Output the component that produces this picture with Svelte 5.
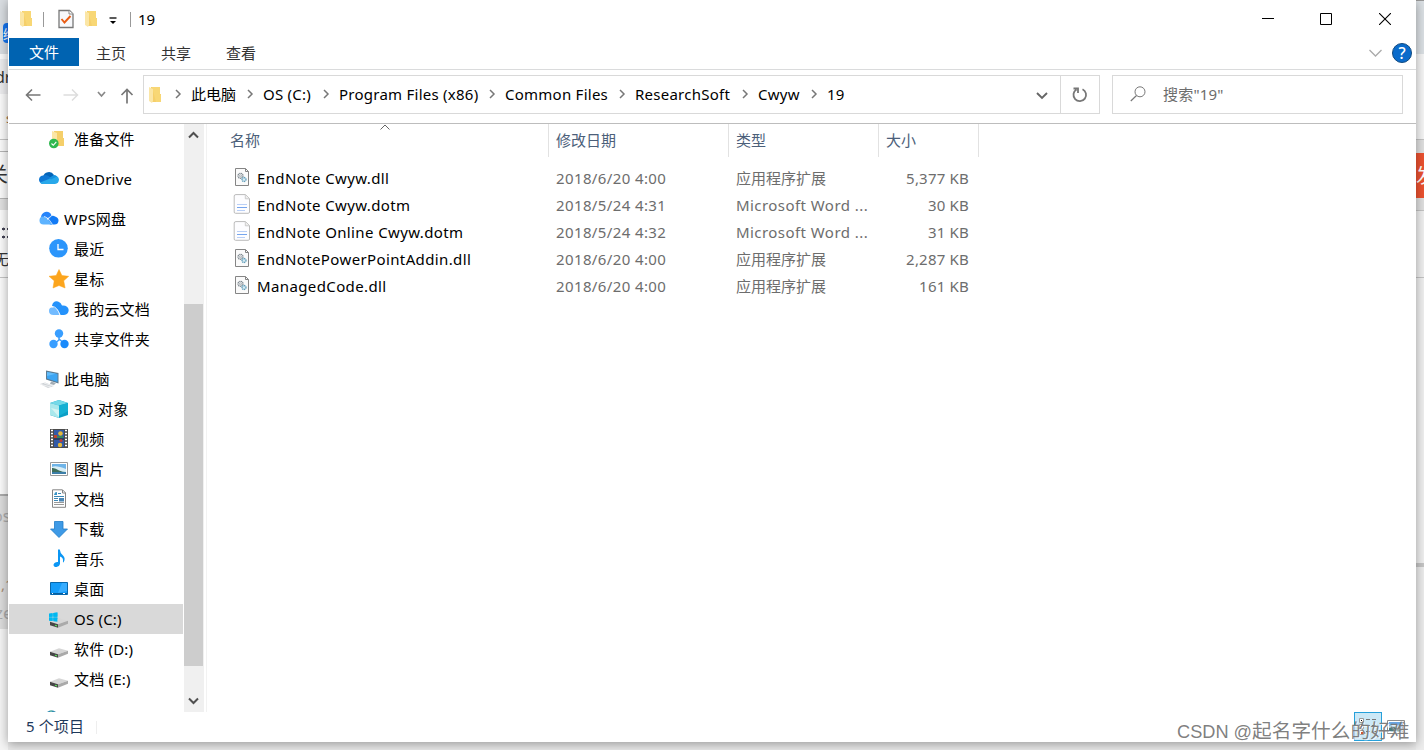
<script>
  const crumbs = [
    { t: '此电脑', w: 72 },
    { t: 'OS (C:)', w: 76 },
    { t: 'Program Files (x86)', w: 166 },
    { t: 'Common Files', w: 130 },
    { t: 'ResearchSoft', w: 123 },
    { t: 'Cwyw', w: 69 },
    { t: '19', w: 40 }
  ];
  const nav = [
    { t: '准备文件', i: 'sync' },
    { t: 'OneDrive', i: 'onedrive', root: true },
    { t: 'WPS网盘', i: 'wps', root: true },
    { t: '最近', i: 'clock' },
    { t: '星标', i: 'star' },
    { t: '我的云文档', i: 'cloud' },
    { t: '共享文件夹', i: 'share' },
    { t: '此电脑', i: 'pc', root: true },
    { t: '3D 对象', i: 'cube' },
    { t: '视频', i: 'video' },
    { t: '图片', i: 'picture' },
    { t: '文档', i: 'doc' },
    { t: '下载', i: 'down' },
    { t: '音乐', i: 'music' },
    { t: '桌面', i: 'desktop' },
    { t: 'OS (C:)', i: 'osdrive', sel: true },
    { t: '软件 (D:)', i: 'drive' },
    { t: '文档 (E:)', i: 'drive' },
    { t: '', i: 'net', root: true }
  ];
  const files = [
    { n: 'EndNote Cwyw.dll', d: '2018/6/20 4:00', k: '应用程序扩展', s: '5,377 KB', i: 'dll' },
    { n: 'EndNote Cwyw.dotm', d: '2018/5/24 4:31', k: 'Microsoft Word ...', s: '30 KB', i: 'dotm' },
    { n: 'EndNote Online Cwyw.dotm', d: '2018/5/24 4:32', k: 'Microsoft Word ...', s: '31 KB', i: 'dotm' },
    { n: 'EndNotePowerPointAddin.dll', d: '2018/6/20 4:00', k: '应用程序扩展', s: '2,287 KB', i: 'dll' },
    { n: 'ManagedCode.dll', d: '2018/6/20 4:00', k: '应用程序扩展', s: '161 KB', i: 'dll' }
  ];
</script>

{#snippet folder()}
  <svg width="14" height="18" viewBox="0 0 14 18"><path d="M3 1h9v7h1v8H3z" fill="#f5cf6a"/><path d="M4 1h8v7l1 1v7H8z" fill="#f8d775"/><path d="M1 1l4 2v12l-1 2-3-2z" fill="#fbe6a6"/></svg>
{/snippet}

{#snippet chev()}
  <svg class="chev" width="8" height="10" viewBox="0 0 8 10"><path d="M2 1l4 4-4 4" fill="none" stroke="#777" stroke-width="1.5"/></svg>
{/snippet}

{#snippet icon(name)}
  <svg class="ico" width="20" height="20" viewBox="0 0 20 20">
    {#if name === 'sync'}
      <path d="M5 2h9v7h1v8H5z" fill="#f5cf6a"/><path d="M3 2l5 2v12H3z" fill="#fbe6a6"/>
      <circle cx="4.8" cy="14.5" r="4.8" fill="#2fb84f"/><path d="M2.5 14.5l1.8 1.8 3-3.4" fill="none" stroke="#fff" stroke-width="1.1"/>
    {:else if name === 'onedrive'}
      <path d="M4 8a6 6 0 0 1 11-2l-2 5H4z" fill="#0364b8"/><path d="M4.500 6.500Q8 5 12 9l-5 6H4a4 4 0 0 1 .5-8.500z" fill="#0f78d4"/>
      <path d="M10 10l5-3.500a4.500 4.500 0 0 1 5 4q-.2 4-4 4.500H4q-2 0-3-1.500z" fill="#28a8ea"/><path d="M10 9l5-3q2 .3 3 1.500l-6 3z" fill="#1490df"/>
    {:else if name === 'wps'}
      <path d="M2 8.500q0-4 4-5.500 5-1 6.500 3.500L9 9z" fill="#2684fa"/><path d="M8 12q3-6 7-5 5 1.500 4.500 5-.5 3.500-4 3.500H11z" fill="#127af5"/><path d="M4 7.500q3 0 5.500 3.500l4 4.500H4.500Q.5 15.500.5 11.500T4 7.500z" fill="#5db3ff"/><path d="M5 7.500q4 .5 8.500 8M8.500 11q2-3 4-4" stroke="#fff" stroke-width=".7" fill="none"/>
    {:else if name === 'clock'}
      <circle cx="9.500" cy="9.300" r="9.300" fill="#2b95fb"/><path d="M9 5v5.500h5.500" fill="none" stroke="#fff" stroke-width="1.300"/>
    {:else if name === 'star'}
      <path d="M10 .5l2.900 6 6.800.8-5 4.500 1.400 7.200L10 16.500 4 19l1.200-7.200L0 7.300l7.200-.8z" fill="#fca51d" stroke="#fca51d" stroke-linejoin="round" stroke-width=".5"/>
    {:else if name === 'cloud'}
      <path d="M3 7q1-5.500 6-4.500 3 1 4 4 6-.5 6.700 4.500-.2 4.500-4.700 5h-3.500z" fill="#2492fb"/><path d="M3.500 8.500Q7 8.500 9 12l2 4H4.500Q0 16 0 12t3.500-3.500z" fill="#72bbff"/><path d="M3 7.500q5 0 8 8.500" fill="none" stroke="#fff" stroke-width="1"/>
    {:else if name === 'share'}
      <path d="M10 4v7L5 15M10 10l6 5" stroke="#3b9cfb" stroke-width="1.500" fill="none"/><circle cx="10" cy="4.500" r="4.200" fill="#399eff"/><circle cx="4.500" cy="15" r="4.200" fill="#399eff"/><circle cx="15.500" cy="15" r="4.200" fill="#198afb"/>
    {:else if name === 'pc'}
      <path d="M7 1.500l12.500 2.500v10.500L7 10.500z" fill="#5c7b92"/><path d="M8 3l10.500 2v8L8 9.500z" fill="#3ca5f3"/><path d="M8 3l9 1.700L8 7z" fill="#62bcfa"/><path d="M12 12.500l5 1.500-2 2-4-1z" fill="#a3adb5"/><path d="M1 15l5-1.500 9 3.500-6 2z" fill="#cfd3d7"/><path d="M2 15.500l10 2.500m-7-4 9 3" stroke="#fff" stroke-width=".6"/>
    {:else if name === 'cube'}
      <path d="M1 4l9-3 9 3v12l-9 3-9-3z" fill="#0c9fc5"/><path d="M1 4l9-3 9 3-9 2.500z" fill="#74d9e8"/><path d="M1 4l9 2.500V19l-9-3z" fill="#a9e8ec"/><path d="M2 9l8 2v7z" fill="#d5f4f3"/><path d="M10 6.500L19 4v8l-9 5z" fill="#16b0d3"/>
    {:else if name === 'video'}
      <path d="M1 0h18v19H1z" fill="#4b4b4b"/><path d="M5 1h10v17H5z" fill="#325aa8"/><path d="M5 10h10" stroke="#222"/><path d="M2 1.500h2m-2 3h2m-2 3h2m-2 3h2m-2 3h2m-2 3h2M16 1.500h2m-2 3h2m-2 3h2m-2 3h2m-2 3h2m-2 3h2" stroke="#fff" stroke-width="1.600"/><circle cx="11.500" cy="4.500" r="2.300" fill="#e4b93b"/><path d="M5 6h3v3H5z" fill="#bc442e"/><path d="M8 7h6v2H8z" fill="#37875a"/><circle cx="11" cy="16" r="2.200" fill="#e4b93b"/><circle cx="12" cy="11.500" r="1.500" fill="#c03e38"/>
    {:else if name === 'picture'}
      <path d="M1.500 3.500h17v13h-17z" fill="#fff" stroke="#9a9a9a"/><path d="M3 5h14v10H3z" fill="#6fb4e8"/><path d="M3 8q4-2 14 2v3H3z" fill="#d8edf5"/><path d="M3 9q3-.5 7 2.500 4 1.500 7 1.500H3z" fill="#3f6e5b"/><path d="M3 13h14v2H3z" fill="#3c7ea8"/>
    {:else if name === 'doc'}
      <path d="M3.500.8h10l3 3v14.500h-13z" fill="#fff" stroke="#868686"/><path d="M13.500 1v3h3" fill="none" stroke="#868686"/><path d="M5 6l1-2.500L8 3v3z" fill="#3894c7"/><path d="M9 4.500h3M5 7.500h10M5 9.500h4M5 11.500h4" stroke="#3b88b6"/><path d="M10 9h5v3.500h-5z" fill="#4a86b5"/><path d="M5 13.500h10M5 15.500h10" stroke="#999"/>
    {:else if name === 'down'}
      <path d="M5.500 2.500h8.500V10h4.500L10 18.500 1.500 10h4z" fill="#3e9ae6" stroke="#1f7cc8" stroke-width=".8"/>
    {:else if name === 'music'}
      <path d="M9 .5h1.800Q11 4 14 6.500q3 3 .5 7-1-.3-.5-1 .5-4-3-5v7.500q-.5 2.700-3.500 3-3 0-3-2.300 1-3 4.500-2.700z" fill="#0b96f4"/>
    {:else if name === 'desktop'}
      <path d="M1.500 3.500h17v12h-17z" fill="#159cf9" stroke="#0868ad"/><path d="M13 4h5v8L9 14z" fill="#38adff"/><path d="M2 14.500h16" stroke="#075e9d"/><path d="M3 14.500h1m10 0h2" stroke="#fff"/>
    {:else if name === 'osdrive' || name === 'drive'}
      {#if name === 'osdrive'}<path d="M0 4.800l3.600-.6v3.600H0zM4.300 4.100L8.400 3.500v4.300H4.300zM0 8.500h3.600v3.600L0 11.500zM4.300 8.500h4.100v4.300l-4.100-.6z" fill="#00b8f1"/>{/if}
      <g transform="translate(0 .8)"><path d="M1 12l9-3.500 9 2.500-10 3.500z" fill="#d6d6d6"/><path d="M9 14.500l10-3.500v3L9 18z" fill="#aaa"/><path d="M1 12l8 2.500V18l-8-2.500z" fill="#464646"/><path d="M6 15.500l2 .6" stroke="#5ee65c" stroke-width="1.200"/></g>
      {#if name === 'osdrive'}<path d="M0 4.800l3.600-.6v3.600H0zM4.300 4.100L8.400 3.500v4.300H4.300zM0 8.500h3.600v3.600L0 11.500zM4.300 8.500h4.100v4.300l-4.100-.6z" fill="#00b8f1"/>{/if}
    {:else if name === 'net'}
      <path d="M8 3q4.500-3.500 9 0v3H8z" fill="#328daf"/><path d="M11 2h2" stroke="#8fd7b1"/>
    {/if}
  </svg>
{/snippet}

{#snippet fileIcon(name)}
  <svg class="fico" width="18" height="20" viewBox="0 0 18 20">
    {#if name === 'dll'}
      <path d="M2.500 1.500h10l3 3v14h-13z" fill="#fafafa" stroke="#858585"/><path d="M12.500 1.500v3h3" fill="none" stroke="#858585"/>
      <circle cx="7.500" cy="8.800" r="2.500" fill="none" stroke="#7d8890" stroke-width="1.300" stroke-dasharray="1.200 .5"/><circle cx="7.500" cy="8.800" r="1" fill="none" stroke="#8b949a" stroke-width=".7"/><circle cx="11" cy="12.500" r="2" fill="#d9edf5" stroke="#619db9" stroke-width="1.300" stroke-dasharray="1.200 .5"/>
    {:else}
      <path d="M3 .6h9.500l4 4V18q0 1.300-1.300 1.300H2.500Q1.200 19.300 1.200 18V2Q1.200.6 3 .6z" fill="#fdfdff" stroke="#bbb"/><path d="M12.300.8v4h4" fill="#eee" stroke="#c3c3c3" stroke-width=".8"/><path d="M4 10.500h10" stroke="#b9cff6"/><path d="M4 13.500h10" stroke="#76a5ee"/><path d="M4 16.500h8" stroke="#b9cff6"/>
    {/if}
  </svg>
{/snippet}

<div class="stage">
  <div class="strip left">
    <i class="badge">绘</i><span class="t1">dr</span><span class="t2">s</span><i class="rule a"></i><i class="band"></i>
    <span class="t3">关</span><i class="band b2"></i><span class="dots"></span><span class="t4">无</span><i class="rule b"></i>
    <i class="dim"></i><span class="t5">os</span><span class="t6">,1</span><span class="t7">ze</span>
  </div>
  <div class="strip right"><i class="rule a"></i><i class="rule c"></i><i class="rule b"></i><span class="red">发</span><i class="low"></i></div>

  <main class="window">
    <header class="title">
      {@render folder()}<i class="sep s1"></i>
      <svg class="check" width="16" height="20" viewBox="0 0 16 20"><path d="M1 1.500h10.500l3.500 3.500v13.500H1z" fill="#f7f8fb" stroke="#777" stroke-width="1.300"/><path d="M11 1.500V5h4" fill="#fff" stroke="#888"/><path d="M3.500 10l3 3.500 6-6.500" fill="none" stroke="#e85c14" stroke-width="1.900"/></svg>
      {@render folder()}
      <svg class="more" width="8" height="8" viewBox="0 0 8 8"><path d="M.5 1h7" stroke="#000" stroke-width="1.300"/><path d="M1 4h6L4 7z"/></svg>
      <i class="sep s2"></i><span class="name">19</span>
      <div class="controls">
        <svg width="12" height="12" viewBox="0 0 12 12"><path d="M0 5.500h12" stroke="#000"/></svg>
        <svg width="12" height="12" viewBox="0 0 12 12"><path d="M.5.5h11v11H.5z" fill="none" stroke="#000"/></svg>
        <svg width="12" height="12" viewBox="0 0 12 12"><path d="M0 0l12 12M12 0L0 12" stroke="#000" stroke-width="1.100"/></svg>
      </div>
    </header>
    <nav class="tabs">
      <span class="file">文件</span><span>主页</span><span>共享</span><span>查看</span>
      <svg class="collapse" width="13" height="8" viewBox="0 0 13 8"><path d="M.5 1l6 6 6-6" fill="none" stroke="#aaa" stroke-width="1.300"/></svg>
      <b class="help">?</b>
    </nav>
    <section class="address">
      <div class="arrows">
        <svg width="16" height="14" viewBox="0 0 16 14"><path d="M15.500 7H1M7 1.500L1.500 7 7 12.500" fill="none" stroke="#777" stroke-width="1.600"/></svg>
        <svg width="16" height="14" viewBox="0 0 16 14"><path d="M.5 7H15M9 1.500L14.500 7 9 12.500" fill="none" stroke="#ddd" stroke-width="1.500"/></svg>
        <svg width="9" height="7" viewBox="0 0 9 7"><path d="M1 1l3.500 4L8 1" fill="none" stroke="#888" stroke-width="1.700"/></svg>
        <svg width="14" height="16" viewBox="0 0 14 16"><path d="M7 15.500V1.500M1.500 7L7 1.500 12.500 7" fill="none" stroke="#777" stroke-width="1.700"/></svg>
      </div>
      <div class="path">
        {@render folder()}
        <div class="lead">{@render chev()}</div>
        {#each crumbs as c, n}
          <div class="crumb" style:width="{c.w}px"><span>{c.t}</span>{#if n < crumbs.length - 1}{@render chev()}{/if}</div>
        {/each}
        <svg class="drop" width="12" height="8" viewBox="0 0 12 8"><path d="M1 1l5 5 5-5" fill="none" stroke="#666" stroke-width="1.900"/></svg>
      </div>
      <div class="refresh"><svg width="16" height="16" viewBox="0 0 16 16"><path d="M10.500 2.200A6.300 6.300 0 1 1 4.500 2.500M1.500 1.500H6V6" fill="none" stroke="#777" stroke-width="1.800"/></svg></div>
      <div class="search"><svg width="16" height="16" viewBox="0 0 16 16"><circle cx="10" cy="5.800" r="5" fill="none" stroke="#777"/><path d="M6.500 9.500L.8 15" stroke="#777" stroke-width="1.200"/></svg><span>搜索"19"</span></div>
    </section>
    <section class="body">
      <aside>
        {#each nav as item}
          <div class="item" class:root={item.root} class:sel={item.sel}>{@render icon(item.i)}<span>{item.t}</span></div>
        {/each}
      </aside>
      <div class="scroll">
        <svg width="11" height="8" viewBox="0 0 11 8"><path d="M1 6.500L5.500 2 10 6.500" fill="none" stroke="#505050" stroke-width="2"/></svg>
        <i></i>
        <svg width="11" height="8" viewBox="0 0 11 8"><path d="M1 1.500L5.500 6 10 1.500" fill="none" stroke="#505050" stroke-width="2"/></svg>
      </div>
      <div class="list">
        <div class="head row">
          <span class="c1">名称</span><span class="c2">修改日期</span><span class="c3">类型</span><span class="c4">大小</span>
          <svg class="sort" width="10" height="6" viewBox="0 0 10 6"><path d="M.5 5.500L5 1l4.500 4.500" fill="none" stroke="#666"/></svg>
        </div>
        <div class="rows">
          {#each files as f}
            <div class="row entry"><span class="c1">{@render fileIcon(f.i)}<em>{f.n}</em></span><span class="c2">{f.d}</span><span class="c3" class:latin={f.i === 'dotm'}>{f.k}</span><span class="c4">{f.s}</span></div>
          {/each}
        </div>
      </div>
    </section>
    <footer>
      <span class="count">5 个项目</span><i></i>
      <div class="views">
        <b><svg width="20" height="20" viewBox="0 0 20 20"><path d="M1.500 1.500h4v4h-4zM1.500 7.500h4v4h-4zM1.500 13.500h4v4h-4z" fill="#fff" stroke="#999"/><path d="M3 3h1v1H3z"/><path d="M3 9h1v1H3z" fill="#297fc0"/><path d="M3 15h2v2H3z" fill="#d4552e"/><path d="M8 2.500h4m2 0h4M8 8.500h4m2 0h4M8 14.500h4m2 0h4" stroke="#777"/></svg></b>
        <svg width="18" height="14" viewBox="0 0 18 14"><path d="M.5.5h17v13H.5z" fill="#fff" stroke="#8d8d8d"/><path d="M2 2h14v10H2z" fill="#69a6e5"/><path d="M2 6q5-3 14 2v4H2z" fill="#bdd6e4"/><path d="M2 8l5-1 9 4H2z" fill="#4d7c7d"/></svg>
      </div>
    </footer>
  </main>
  <div class="mark"><span>CSDN @</span>起名字什么的好难</div>
</div>

<style>
  :global(body) { margin: 0; overflow: hidden; }
  .stage { position: relative; display: flex; width: 1424px; height: 750px; padding-left: 8px; box-sizing: border-box; background: #e9e9e9; overflow: hidden; font-family: "Noto Sans", "Noto Sans CJK SC", sans-serif; font-size: 15px; color: #000; }
  i, em { font-style: normal; }
  svg { display: block; flex: none; }
  span { white-space: nowrap; }
  .window { position: relative; width: 1408px; height: 742px; background: #fff; box-shadow: 0 2px 10px rgba(0,0,0,.36); display: flex; flex-direction: column; }

  .strip { position: absolute; top: 0; width: 8px; height: 750px; overflow: hidden; color: #333; }
  .strip > * { position: absolute; line-height: 22px; }
  .left { left: 0; background: linear-gradient(#d9dde1 0 54px, #fafafa 54px 59px, #ececee 59px 94px, #fafafa 94px 494px, #dcdcdc 494px 629px, #f4f4f4 629px); }
  .right { right: 0; background: linear-gradient(#999 0 1px, #dbe0e4 1px 54px, #f6f6f6 54px 139px, #e0e0e0 139px 210px, #f0f0f0 210px 563px, #ededed 563px); }
  .badge { left: 3px; top: 23px; width: 18px; height: 20px; border-radius: 4px; background: #1574ef; color: #fff; font-size: 13px; }
  .t1 { left: -5px; top: 66px; font-size: 16px; }
  .t2 { left: 6px; top: 107px; font-size: 13px; color: #976b3e; }
  .t3 { left: -12px; top: 164px; font-size: 20px; }
  .t4 { left: -6px; top: 248px; }
  .t5 { left: -7px; top: 505px; font-size: 16px; color: #aaa; }
  .t6 { left: 1px; top: 573px; color: #a98d72; }
  .t7 { left: -5px; top: 602px; font-size: 17px; color: #aaa; }
  .rule { left: 0; width: 8px; height: 1px; background: #c4c4c4; }
  .rule.a { top: 139px; } .rule.b { top: 277px; } .rule.c { top: 210px; }
  .band { left: 0; top: 151px; width: 8px; height: 1px; background: #b5b5b5; }
  .band.b2 { top: 198px; height: 12px; background: #e0e0e0; border-top: 1px solid #b5b5b5; box-sizing: border-box; }
  .dots { left: 1px; top: 225px; width: 7px; height: 16px; background: radial-gradient(circle, #445 1.200px, transparent 1.700px) 0 0 / 5px 8px; }
  .dim { left: 0; top: 494px; width: 8px; height: 2px; background: #aaa; }
  .red { left: 0; top: 153px; width: 30px; height: 45px; line-height: 45px !important; font-size: 20px; background: #ec5230; color: #fff; }
  .low { left: 0; top: 563px; width: 8px; height: 4px; background: #c6c6c6; }

  .title { height: 38px; display: flex; align-items: center; padding-left: 11px; box-sizing: border-box; flex: none; }
  .sep { width: 1px; height: 15px; background: #999; }
  .s1 { margin: 0 14px 0 10px; }
  .check { margin-right: 10px; }
  .more { margin-left: 11px; margin-top: 3px; }
  .s2 { margin-left: 13px; }
  .name { margin-left: 7px; line-height: 20px; }
  .controls { margin-left: auto; display: flex; gap: 47px; padding-right: 25px; }
  .controls svg:first-child { margin-right: -1px; }
  .tabs { height: 31px; border-bottom: 1px solid #dadbdc; display: flex; flex: none; box-sizing: content-box; color: #333; align-items: flex-start; margin-left: 1px; }
  .tabs span { line-height: 28px; margin-right: 35px; padding-top: 1px; }
  .tabs .file { background: #0063b1; color: #fff; width: 70px; height: 28px; padding: 0; text-align: center; margin-right: 17px; }
  .collapse { margin: 11px 10px 0 auto; }
  .help { width: 20px; height: 20px; box-sizing: border-box; border: 1px solid #114a80; border-radius: 50%; background: #0a6bcb; color: #fff; text-align: center; line-height: 18px; font-size: 16px; font-weight: 500; margin: 5px 4px 0 0; }
  .address { height: 54px; flex: none; box-sizing: border-box; border-bottom: 1px solid #bdbdbd; display: flex; padding: 5px 13px 9px 16px; margin-left: 1px; }
  .arrows { display: flex; align-items: center; width: 118px; }
  .arrows svg:nth-child(2) { margin-left: 22px; }
  .arrows svg:nth-child(3) { margin-left: 18px; }
  .arrows svg:nth-child(4) { margin-left: 14px; margin-top: 2px; }
  .path { width: 918px; height: 39px; box-sizing: border-box; border: 1px solid #d9d9d9; display: flex; align-items: center; padding-left: 4px; }
  .lead { width: 29px; box-sizing: border-box; padding-left: 2px; display: flex; justify-content: center; }
  .chev { margin-top: -2px; }
  .crumb { display: flex; align-items: center; justify-content: space-between; flex: none; box-sizing: border-box; padding-right: 9px; line-height: 22px; letter-spacing: .25px; }
  .crumb span { margin-top: -2px; }
  .crumb:nth-child(3) { letter-spacing: 0; }
  .drop { margin: 2px 12px 0 auto; }
  .refresh { width: 39px; box-sizing: border-box; height: 39px; border: 1px solid #d9d9d9; border-left: 0; display: grid; place-items: center; }
  .search { margin-left: 12px; width: 291px; box-sizing: border-box; height: 39px; border: 1px solid #d9d9d9; display: flex; align-items: center; padding-left: 17px; gap: 17px; color: #6d6d6d; letter-spacing: .2px; }
  .search span { margin-top: -2px; }
  .search svg { margin-top: -1px; }
  .body { flex: none; height: 588px; display: flex; }
  aside { width: 174px; margin-left: 1px; margin-right: 1px; height: 588px; overflow: hidden; }
  .item { height: 30px; display: flex; align-items: center; padding-left: 40px; gap: 5px; box-sizing: border-box; line-height: 22px; letter-spacing: .2px; }
  .root { padding-left: 30px; margin-top: 10px; }
  .sel { background: #d9d9d9; }
  .scroll { width: 20px; background: #f0f0f0; display: flex; flex-direction: column; align-items: center; padding: 7px 1px 7px 0; box-sizing: border-box; margin-right: 2px; }
  .scroll i { width: 19px; height: 362px; margin-top: 165px; background: #cdcdcd; }
  .scroll svg:last-child { margin-top: auto; }
  .list { flex: 1; border-left: 1px solid #f2f2f2; }
  .row { display: grid; grid-template-columns: 342px 180px 150px 100px; position: relative; }
  .head { height: 33px; line-height: 33px; color: #4c607a; }
  .head span { border-right: 1px solid #e2e2e2; }
  .head .c1 { padding-left: 23px; }
  .head .c2, .head .c3, .head .c4 { padding-left: 7px; }
  .sort { position: absolute; left: 173px; top: 0; }
  .rows { padding-top: 8px; }
  .entry { height: 27px; line-height: 26px; color: #6d6d6d; }
  .entry .c1 { display: flex; padding-left: 26px; color: #000; gap: 6px; letter-spacing: .38px; }
  .entry .c2, .entry .c3 { padding-left: 7px; }
  .entry .c2 { letter-spacing: .38px; }
  .entry .latin { letter-spacing: .44px; }
  .entry .c4 { text-align: right; padding-right: 10px; letter-spacing: .2px; }
  .fico { margin-top: 2px; }
  footer { height: 30px; display: flex; align-items: center; padding-left: 18px; box-sizing: border-box; color: #1e395b; }
  .count { margin-top: -3px; letter-spacing: .1px; }
  footer > i { width: 1px; height: 13px; background: #eee; margin-left: 12px; }
  .views { margin-left: auto; margin-top: -1px; display: flex; align-items: center; padding-right: 11px; gap: 5px; }
  .views b { width: 28px; height: 29px; box-sizing: border-box; border: 1px solid #26a0da; background: #cbe8f6; display: grid; place-items: center; }
  .mark { position: absolute; left: 1177px; top: 719px; line-height: 24px; font-size: 19.700px; color: rgba(120,120,120,.95); text-shadow: 1px 1px 0 rgba(255,255,255,.7); white-space: nowrap; font-family: "Liberation Sans", "Noto Sans CJK SC", sans-serif; }
  .mark span { font-size: 18.200px; }
</style>
